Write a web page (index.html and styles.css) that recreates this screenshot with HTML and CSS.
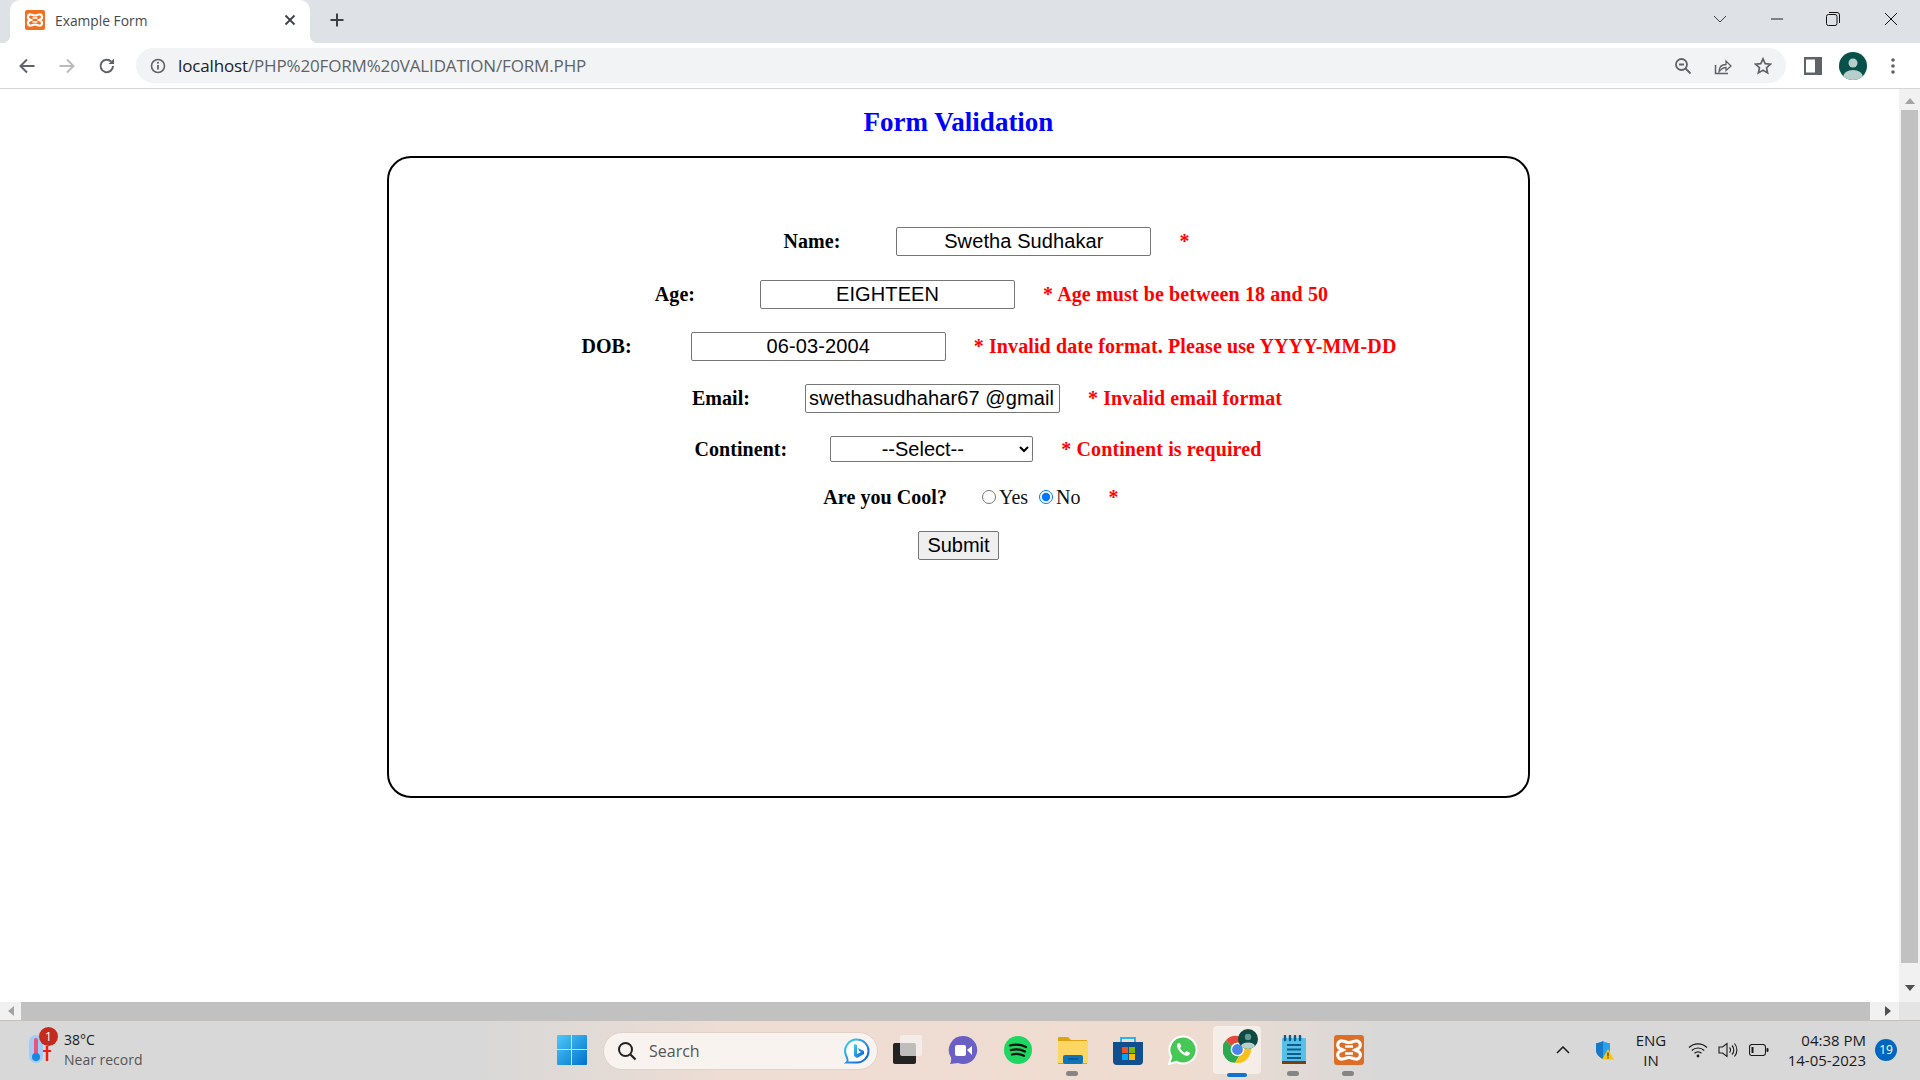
FILE: index.html
```html
<!DOCTYPE html>
<html lang="en">
<head>
<meta charset="utf-8">
<title>Example Form</title>
<link rel="stylesheet" href="styles.css">
</head>
<body>
<div class="window">
  <header class="tabstrip">
    <div class="tab">
      <svg class="favicon" viewBox="0 0 20 20"><rect width="20" height="20" rx="2" fill="#f0701f"/><path d="M6 4.500c1.500 0 2 1 4 1s2.500-1 4-1a2.500 2.500 0 0 1 1 5l-1 .5 1 .5a2.500 2.500 0 0 1-1 5c-1.500 0-2-1-4-1s-2.500 1-4 1a2.500 2.500 0 0 1-1-5l1-.5-1-.5a2.500 2.500 0 0 1 1-5Z" fill="none" stroke="#fff" stroke-width="2.200"/><path d="M7.500 8h5M7.500 12h5" stroke="#fff" stroke-width="1.500"/></svg>
      <span class="tab-title">Example Form</span>
      <svg class="tab-close" viewBox="0 0 12 12"><path d="M1.500 1.500l9 9M10.500 1.500l-9 9" stroke="#3c4043" stroke-width="1.800"/></svg>
    </div>
    <svg class="new-tab" viewBox="0 0 16 16"><path d="M8 1.500v13M1.500 8h13" stroke="#3c4043" stroke-width="2"/></svg>
    <div class="window-controls">
      <svg class="wc wc-chev" viewBox="0 0 14 8"><path d="M1 1l6 6 6-6" fill="none" stroke="#3c4043" stroke-width="1"/></svg>
      <svg class="wc wc-min" viewBox="0 0 14 14"><path d="M0 7h13" stroke="#111" stroke-width="1"/></svg>
      <svg class="wc wc-max" viewBox="0 0 14 14"><rect x=".5" y="2.500" width="10.500" height="11" rx="2" fill="none" stroke="#111"/><path d="M3 .5h8a2.500 2.500 0 0 1 2.500 2.500v8" fill="none" stroke="#111"/></svg>
      <svg class="wc wc-close" viewBox="0 0 14 14"><path d="M1 1l12 12M13 1L1 13" stroke="#111" stroke-width="1"/></svg>
    </div>
  </header>

  <nav class="toolbar">
    <svg class="nav-icon" viewBox="0 0 18 18"><path d="M16.500 9H2.500M9 2.500L2.500 9 9 15.500" fill="none" stroke="#5f6368" stroke-width="2"/></svg>
    <svg class="nav-icon" viewBox="0 0 18 18"><path d="M1.500 9h14M9 2.500L15.500 9 9 15.500" fill="none" stroke="#b9bbbe" stroke-width="2"/></svg>
    <svg class="nav-icon" viewBox="0 0 18 18"><path d="M15 9a6.200 6.200 0 1 1-1.800-4.400" fill="none" stroke="#5f6368" stroke-width="2"/><path d="M16 1.500V7h-5.500z" fill="#5f6368"/></svg>
    <div class="omnibox">
      <svg class="info" viewBox="0 0 16 16"><circle cx="8" cy="8" r="6.500" fill="none" stroke="#5f6368" stroke-width="1.600"/><path d="M8 7v4.500" stroke="#5f6368" stroke-width="1.800"/><circle cx="8" cy="4.800" r="1" fill="#5f6368"/></svg>
      <span class="url"><span class="url-host">localhost</span>/PHP%20FORM%20VALIDATION/FORM.PHP</span>
      <span class="omni-actions">
        <svg class="omni-icon" viewBox="0 0 18 18"><circle cx="7.500" cy="7.500" r="5.500" fill="none" stroke="#5f6368" stroke-width="1.800"/><path d="M5 7.500h5M11.500 11.500l5 5" stroke="#5f6368" stroke-width="1.800"/></svg>
        <svg class="omni-icon" viewBox="0 0 18 18"><path d="M1.500 8v8.500h12.500" fill="none" stroke="#5f6368" stroke-width="1.500"/><path d="M5 15c0-5 3-7.500 7-7.500V4l5 5-5 4.500V10.500c-3 0-5 1.500-7 4.500Z" fill="none" stroke="#5f6368" stroke-width="1.300"/></svg>
        <svg class="omni-icon" viewBox="0 0 18 18"><path d="M9 1.800l2.200 4.800 5.200.6-3.900 3.500 1.100 5.200L9 13.200l-4.600 2.700 1.100-5.200-3.900-3.500 5.200-.6z" fill="none" stroke="#5f6368" stroke-width="1.700"/></svg>
      </span>
    </div>
    <svg class="side-panel" viewBox="0 0 18 18"><rect width="18" height="18" fill="#5f6368"/><rect x="2" y="2.500" width="9" height="13" fill="#fff"/></svg>
    <svg class="avatar" viewBox="0 0 28 28"><defs><clipPath id="av"><circle cx="14" cy="14" r="14"/></clipPath></defs><circle cx="14" cy="14" r="14" fill="#07514a"/><g clip-path="url(#av)"><circle cx="14" cy="11" r="4.500" fill="#b5d0ca"/><ellipse cx="14" cy="25" rx="10" ry="7" fill="#b5d0ca"/></g></svg>
    <svg class="menu" viewBox="0 0 4 16"><circle cx="2" cy="2" r="1.800" fill="#5f6368"/><circle cx="2" cy="8" r="1.800" fill="#5f6368"/><circle cx="2" cy="14" r="1.800" fill="#5f6368"/></svg>
  </nav>

  <div class="viewport">
    <main class="page">
      <h1 class="title">Form Validation</h1>
      <form class="card">
        <div class="row row-name">
          <label class="label">Name:</label>
          <input class="field" type="text" value="Swetha Sudhakar">
          <span class="err">*</span>
        </div>
        <div class="row row-age">
          <label class="label">Age:</label>
          <input class="field" type="text" value="EIGHTEEN">
          <span class="err">* Age must be between 18 and 50</span>
        </div>
        <div class="row row-dob">
          <label class="label">DOB:</label>
          <input class="field" type="text" value="06-03-2004">
          <span class="err">* Invalid date format. Please use YYYY-MM-DD</span>
        </div>
        <div class="row row-email">
          <label class="label">Email:</label>
          <input class="field field-left" type="text" value="swethasudhahar67 @gmail">
          <span class="err">* Invalid email format</span>
        </div>
        <div class="row row-continent">
          <label class="label">Continent:</label>
          <select class="picker"><option>--Select--</option></select>
          <span class="err">* Continent is required</span>
        </div>
        <div class="row row-cool">
          <span class="label">Are you Cool?</span>
          <span class="radios">
            <input class="radio" type="radio" name="cool"><span class="radio-text">Yes</span>
            <input class="radio radio-no" type="radio" name="cool" checked><span class="radio-text">No</span>
          </span>
          <span class="err">*</span>
        </div>
        <div class="row row-submit">
          <button class="submit" type="button">Submit</button>
        </div>
      </form>
    </main>
    <aside class="vscroll">
      <svg class="v-arrow" viewBox="0 0 10 6"><path d="M5 0l5 6H0z" fill="#a3a3a3"/></svg>
      <div class="v-thumb"></div>
      <svg class="v-arrow v-arrow-down" viewBox="0 0 10 6"><path d="M5 6L0 0h10z" fill="#505050"/></svg>
    </aside>
  </div>

  <div class="hscroll">
    <svg class="h-arrow" viewBox="0 0 6 10"><path d="M0 5l6-5v10z" fill="#a3a3a3"/></svg>
    <div class="h-thumb"></div>
    <svg class="h-arrow h-arrow-right" viewBox="0 0 6 10"><path d="M6 5L0 0v10z" fill="#505050"/></svg>
    <div class="h-corner"></div>
  </div>

  <footer class="taskbar">
    <div class="weather">
      <span class="weather-icon">
        <svg viewBox="0 0 24 36" class="thermo"><rect x="1" y="1" width="14" height="28" rx="7" fill="#9fcdf5"/><rect x="6" y="4" width="4" height="20" rx="2" fill="#e8557c"/><circle cx="8" cy="23" r="4" fill="#1a86e0"/><path d="M19 12v15" stroke="#f21c12" stroke-width="2.500"/><path d="M15 17h8" stroke="#f21c12" stroke-width="2"/></svg>
        <span class="alert">1</span>
      </span>
      <span class="weather-text"><span class="temp">38°C</span><span class="record">Near record</span></span>
    </div>
    <div class="dock">
      <span class="dock-item"><svg class="ic" viewBox="0 0 30 30"><defs><linearGradient id="win" x1="0" y1="0" x2="1" y2="1"><stop offset="0" stop-color="#50c8fb"/><stop offset="1" stop-color="#0072cc"/></linearGradient></defs><path d="M0 1a1 1 0 0 1 1-1h13v14H0zM15 0h14a1 1 0 0 1 1 1v13H15zM0 15h14v15H1a1 1 0 0 1-1-1zM15 15h15v14a1 1 0 0 1-1 1H15z" fill="url(#win)"/></svg></span>
      <div class="searchbox">
        <svg class="search-glass" viewBox="0 0 20 20"><circle cx="8.500" cy="8.500" r="6.500" fill="none" stroke="#222" stroke-width="2"/><path d="M13.500 13.500l5 5" stroke="#222" stroke-width="2.200"/></svg>
        <span class="search-text">Search</span>
        <svg class="bing" viewBox="0 0 26 26"><defs><linearGradient id="bg" x1="0" y1="0" x2="1" y2="1"><stop offset="0" stop-color="#3dd0f0"/><stop offset="1" stop-color="#1057d8"/></linearGradient></defs><path d="M13 1.500a11.500 11.500 0 0 1 0 23H2.500c2-1.500 1-4-.2-6.500A11.500 11.500 0 0 1 13 1.500Z" fill="#fff" stroke="url(#bg)" stroke-width="2"/><path d="M10 6l3 1v9l4-2-2-1-1-3 6 3v3l-7 4-3-2z" fill="url(#bg)"/></svg>
      </div>
      <span class="dock-item"><svg class="ic" viewBox="0 0 30 30"><rect x="0" y="8" width="23" height="21" rx="2" fill="#232323"/><rect x="7" y="0" width="22" height="21" rx="2" fill="#f4f2f0" fill-opacity=".75"/></svg></span>
      <span class="dock-item"><svg class="ic" viewBox="0 0 30 30"><path d="M15 1a14 14 0 1 1-5 27l-8 1c1-2 1.500-4 1-6.500A14 14 0 0 1 15 1Z" fill="#6a5fc4"/><rect x="7" y="10" width="11" height="11" rx="2" fill="#fff"/><path d="M19 15l5-4v9z" fill="#fff"/></svg></span>
      <span class="dock-item"><svg class="ic" viewBox="0 0 30 30"><circle cx="15" cy="15" r="14" fill="#1ed760"/><path d="M7 10.500c6-1.500 11-1 16 1.500M8 15c5-1.200 10-.8 14 1.500M9 19.500c4-1 8-.7 12 1.200" fill="none" stroke="#111" stroke-width="2.300" stroke-linecap="round"/></svg></span>
      <span class="dock-item with-dot"><svg class="ic" viewBox="0 0 30 30"><path d="M0 3a1 1 0 0 1 1-1h9l3 3h16v24H0z" fill="#dfa210"/><path d="M0 6h30v22H0z" fill="#fbd662"/><rect x="5" y="20" width="20" height="9" rx="2" fill="#0f74b8"/><path d="M10 24h10" stroke="#0a3f78" stroke-width="1"/></svg><i class="dot"></i></span>
      <span class="dock-item"><svg class="ic" viewBox="0 0 30 30"><path d="M8 8V3h14v5" fill="none" stroke="#2cb5e8" stroke-width="2"/><path d="M0 7h30v19a4 4 0 0 1-4 4H4a4 4 0 0 1-4-4z" fill="#114f8f"/><rect x="9" y="12" width="6" height="6" fill="#f25022"/><rect x="16" y="12" width="6" height="6" fill="#7fba00"/><rect x="9" y="19" width="6" height="6" fill="#00a4ef"/><rect x="16" y="19" width="6" height="6" fill="#ffb900"/></svg></span>
      <span class="dock-item"><svg class="ic" viewBox="0 0 30 30"><path d="M15 1.500a13.500 13.500 0 1 1-6.500 25.300L1 29l2.300-7.200A13.500 13.500 0 0 1 15 1.500Z" fill="#47c756" stroke="#fff" stroke-width="2"/><path d="M10.500 8c-2 1-2 4 .5 7.500s6 5.800 8.500 5.300c2-.4 2.800-2.300 2.300-3l-3.300-1.700-1.500 1.600c-2-.7-4-2.600-5-4.800l1.300-1.500L11.800 8z" fill="#fff"/></svg></span>
      <span class="dock-item dock-active">
        <svg class="ic ic-chrome" viewBox="0 0 30 30"><path d="M15 1a14 14 0 0 1 12.100 7H15a7 7 0 0 0-6.100 3.500L3 5.500A14 14 0 0 1 15 1Z" fill="#e5483a"/><path d="M3 5.500a14 14 0 0 0 9.500 23.300l5.800-9.800a7 7 0 0 1-9.400-7.500z" fill="#2da94f"/><path d="M27.100 8H15a7 7 0 0 1 3.300 11l-5.800 9.800A14 14 0 0 0 27.100 8Z" fill="#f7c01d"/><circle cx="15" cy="15" r="7" fill="#fff"/><circle cx="15" cy="15" r="5.600" fill="#4a86e8"/></svg>
        <svg class="chrome-badge" viewBox="0 0 20 20"><defs><clipPath id="cb"><circle cx="10" cy="10" r="10"/></clipPath></defs><circle cx="10" cy="10" r="10" fill="#0e4a43"/><g clip-path="url(#cb)"><circle cx="10" cy="8" r="3.200" fill="#5f9a8e"/><ellipse cx="10" cy="17" rx="7" ry="3.500" fill="#b5d0ca"/></g></svg>
        <i class="active-bar"></i>
      </span>
      <span class="dock-item with-dot dock-late"><svg class="ic" viewBox="0 0 30 30"><rect x="3" y="3" width="24" height="25" rx="1" fill="#55c0e8"/><rect x="3" y="26" width="24" height="3" fill="#7a3e14"/><path d="M6 1v4M11 1v4M16 1v4M21 1v4" stroke="#0d5c8c" stroke-width="2.500" stroke-linecap="round"/><path d="M8 10h14M8 14.500h14M8 19h14M8 23h14" stroke="#0d5c8c" stroke-width="1.800"/></svg><i class="dot"></i></span>
      <span class="dock-item with-dot"><svg class="ic" viewBox="0 0 30 30"><rect width="30" height="30" rx="3" fill="#dc6f28"/><path d="M8.500 6c2.500 0 3.500 1.500 6.500 1.500S19 6 21.500 6a4 4 0 0 1 1.500 8l-2 1 2 1a4 4 0 0 1-1.500 8c-2.500 0-3.500-1.500-6.500-1.500S11 24 8.500 24a4 4 0 0 1-1.500-8l2-1-2-1a4 4 0 0 1 1.500-8Z" fill="none" stroke="#fff" stroke-width="3.200"/><path d="M11 11.500h8M11 18.500h8" stroke="#fff" stroke-width="2.500"/></svg><i class="dot"></i></span>
    </div>
    <div class="tray">
      <svg class="tray-caret" viewBox="0 0 14 8"><path d="M1 7l6-6 6 6" fill="none" stroke="#1a1a1a" stroke-width="1.500"/></svg>
      <svg class="tray-shield" viewBox="0 0 20 20"><path d="M9 1c2.500 1.500 4.500 2 7 2.200v6.800c0 4-3 7-7 9-4-2-7-5-7-9V3.200C4.500 3 6.500 2.500 9 1Z" fill="#2aa0e8"/><path d="M9 1v18c-4-2-7-5-7-9V3.200C4.500 3 6.500 2.500 9 1Z" fill="#1878c8"/><path d="M14 9l6 10.500H8z" fill="#fcc419"/><path d="M14 12.500v4M14 17.300v1.200" stroke="#111" stroke-width="1"/></svg>
      <span class="lang"><span>ENG</span><span>IN</span></span>
      <svg class="tray-wifi" viewBox="0 0 20 16"><path d="M1 5.500a13 13 0 0 1 18 0M3.800 8.500a9 9 0 0 1 12.400 0M6.500 11.300a5 5 0 0 1 7 0" fill="none" stroke="#1a1a1a" stroke-width="1.200"/><circle cx="10" cy="14" r="1.400" fill="#1a1a1a"/></svg>
      <svg class="tray-vol" viewBox="0 0 20 16"><path d="M1 5h3.500L9 1.500v13L4.500 11H1z" fill="none" stroke="#1a1a1a" stroke-width="1.100"/><path d="M11.500 5.500a3.500 3.500 0 0 1 0 5M14 3.500a6.500 6.500 0 0 1 0 9M16.500 1.500a10 10 0 0 1 0 13" fill="none" stroke="#1a1a1a" stroke-width="1.100"/></svg>
      <svg class="tray-batt" viewBox="0 0 20 12"><rect x=".5" y=".5" width="16" height="11" rx="2.500" fill="none" stroke="#1a1a1a" stroke-width="1.100"/><rect x="2.500" y="3" width="2" height="6" fill="#1a1a1a"/><rect x="17.500" y="4" width="2" height="4" rx="1" fill="#1a1a1a"/></svg>
      <span class="clock"><span>04:38 PM</span><span>14-05-2023</span></span>
      <span class="notif">19</span>
    </div>
  </footer>
</div>
</body>
</html>
```

FILE: styles.css
```css
* { box-sizing: border-box; }
html, body { margin: 0; height: 100%; overflow: hidden; background: #fff; }
svg { display: block; flex: none; }

.window {
  width: 1920px;
  height: 1080px;
  display: grid;
  grid-template-rows: 43px 46px 913px 18px 60px;
  font-family: "Open Sans", "Noto Sans", sans-serif;
}

/* tab strip */
.tabstrip { display: flex; align-items: stretch; background: #dee1e6; padding-left: 10px; }
.tab {
  position: relative;
  width: 300px;
  background: #fff;
  border-radius: 10px 10px 0 0;
  display: flex;
  align-items: center;
  padding: 0 14px 3px 15px;
}
.tab::before, .tab::after {
  content: "";
  position: absolute;
  bottom: 0;
  width: 8px;
  height: 8px;
}
.tab::before { left: -8px; background: radial-gradient(circle at 0 0, transparent 8px, #fff 8.500px); }
.tab::after { right: -8px; background: radial-gradient(circle at 100% 0, transparent 8px, #fff 8.500px); }
.favicon { width: 20px; height: 20px; margin-right: 10px; }
.tab-title { font-size: 13.800px; color: #45494d; flex: 1; white-space: nowrap; }
.tab-close { width: 12px; height: 12px; }
.new-tab { width: 16px; height: 16px; align-self: center; margin: -3px 0 0 19px; }
.window-controls { margin-left: auto; display: flex; align-items: center; padding-bottom: 6px; }
.wc-chev { width: 14px; height: 8px; margin-right: 44px; }
.wc-min { width: 13px; height: 14px; margin-right: 42px; }
.wc-max { width: 14px; height: 14px; margin-right: 44px; }
.wc-close { width: 14px; height: 14px; margin-right: 22px; }

/* toolbar */
.toolbar {
  display: flex;
  align-items: center;
  background: #fff;
  border-bottom: 1px solid #d4d5d7;
  padding-left: 18px;
}
.nav-icon { width: 18px; height: 18px; margin-right: 22px; }
.omnibox {
  width: 1650px;
  height: 35px;
  margin-left: -2px;
  background: #f1f3f4;
  border-radius: 18px;
  display: flex;
  align-items: center;
  padding: 0 14px 0 15px;
}
.info { width: 16px; height: 16px; margin-right: 12px; margin-left: -1px; }
.url { font-size: 17px; color: #5f6368; white-space: nowrap; letter-spacing: -.15px; }
.url-host { color: #202124; }
.omni-actions { margin-left: auto; display: flex; align-items: center; gap: 22px; }
.omni-icon { width: 18px; height: 18px; }
.side-panel { width: 18px; height: 18px; margin-left: 18px; }
.avatar { width: 28px; height: 28px; margin-left: 17px; }
.menu { width: 4px; height: 16px; margin-left: 24px; }

/* page */
.viewport { display: flex; overflow: hidden; }
.page { width: 1899px; overflow: hidden; font-family: "Liberation Serif", serif; }
.title {
  width: 1917px;
  margin: 16px 0 0;
  height: 51px;
  font-size: 27px;
  line-height: 34px;
  font-weight: bold;
  color: #0000ff;
  text-align: center;
}
.card {
  width: 1143px;
  height: 642px;
  margin-left: 387px;
  border: 2px solid #000;
  border-radius: 24px;
  padding-top: 68px;
  display: flex;
  flex-direction: column;
}
.row { display: flex; align-items: center; justify-content: center; height: 30px; margin-bottom: 22px; }
.label { font-size: 20px; font-weight: bold; color: #000; padding-top: 1px; letter-spacing: .05px; }
.err { font-size: 20px; font-weight: bold; color: #ff0000; white-space: nowrap; margin-left: 28px; padding-top: 1px; letter-spacing: .11px; }
.field {
  width: 255px;
  height: 29px;
  margin-left: var(--gap, 55px);
  padding: 0 4px;
  border: 1px solid #767676;
  border-radius: 2px;
  background: #fff;
  color: #000;
  font: 20px "Liberation Sans", sans-serif;
  letter-spacing: .1px;
  text-align: center;
}
.field-left { text-align: left; padding-left: 3px; }
.picker {
  width: 203px;
  height: 26px;
  margin-left: 43px;
  padding-right: 6px;
  border: 1px solid #767676;
  border-radius: 2px;
  background: #fff;
  color: #000;
  font: 20px "Liberation Sans", sans-serif;
  text-align: center;
}
.radios { display: flex; align-items: center; margin-left: 35px; font-size: 20px; }
.radio { width: 14px; height: 14px; margin: 0 3px 0 0; }
.radio-no { margin-left: 11px; }
.radio-text { color: #111; }
.submit {
  width: 81px;
  height: 29px;
  padding: 0;
  border: 1px solid #767676;
  border-radius: 2px;
  background: #efefef;
  color: #000;
  font: 20px "Liberation Sans", sans-serif;
}
.row-name { padding-left: 56px; margin-bottom: 23px; --gap: 56px; }
.row-age { padding-left: 66px; --gap: 65px; }
.row-dob { padding-left: 61px; --gap: 59px; }
.row-email { padding-left: 57px; margin-bottom: 21px; --gap: 55px; }
.row-continent { padding-left: 39px; margin-bottom: 18px; }
.row-cool { padding-left: 25px; margin-bottom: 18px; }

/* scrollbars */
.vscroll { width: 21px; background: #f1f1f1; display: flex; flex-direction: column; align-items: center; }
.v-arrow { width: 10px; height: 6px; margin: 9px 0 6px; }
.v-arrow-down { margin: auto 0 11px; }
.v-thumb { width: 17px; height: 853px; background: #c1c1c1; }
.hscroll { display: flex; align-items: center; background: #f1f1f1; }
.h-arrow { width: 6px; height: 10px; margin: 0 7px 0 8px; }
.h-arrow-right { margin: 0 0 0 15px; }
.h-thumb { width: 1849px; height: 18px; background: #c1c1c1; }
.h-corner { width: 21px; height: 18px; background: #e4e4e4; margin-left: auto; }

/* taskbar */
.taskbar {
  display: grid;
  grid-template-columns: 544px 1012px 1fr;
  align-items: center;
  border-top: 1px solid #c4c0be;
  background: linear-gradient(90deg, #d8d8d8 0%, #d8d8d8 25%, #eeddd3 38%, #eedcd1 62%, #d8d8d8 72%, #d8d8d8 100%);
}
.weather { display: flex; align-items: center; padding: 0 0 2px 28px; }
.weather-icon { position: relative; width: 36px; height: 42px; display: block; }
.thermo { width: 24px; height: 36px; margin-top: 5px; }
.alert {
  position: absolute;
  left: 11px;
  top: -2px;
  width: 19px;
  height: 19px;
  border-radius: 50%;
  background: #c42b1c;
  color: #fff;
  font-size: 12px;
  line-height: 19px;
  text-align: center;
}
.weather-text { display: flex; flex-direction: column; font-size: 14px; line-height: 20px; }
.temp { color: #1a1a1a; }
.record { color: #555; }

.dock { display: flex; align-items: center; height: 100%; }
.dock-item { position: relative; width: 55px; height: 100%; display: flex; align-items: center; justify-content: center; padding-bottom: 2px; }
.dock-late { margin-left: 1px; }
.ic { width: 30px; height: 30px; }
.searchbox {
  width: 275px;
  height: 38px;
  margin: 0 2px 0 4px;
  border-radius: 19px;
  background: #f8f3ef;
  border: 1px solid #e0d2ca;
  display: flex;
  align-items: center;
  padding: 0 7px 0 13px;
}
.search-glass { width: 20px; height: 20px; }
.search-text { font-size: 16px; color: #555; margin-left: 12px; }
.bing { width: 26px; height: 26px; margin-left: auto; }
.dot { position: absolute; left: 21px; bottom: 4px; width: 12px; height: 5px; border-radius: 3px; background: #858585; }
.dock-active::before {
  content: "";
  position: absolute;
  left: 3px;
  top: 5px;
  width: 48px;
  height: 48px;
  border-radius: 4px;
  background: #f5ede7;
}
.ic-chrome { position: relative; width: 29px; height: 29px; }
.chrome-badge { position: absolute; left: 28px; top: 8px; width: 20px; height: 20px; }
.active-bar { position: absolute; left: 17px; bottom: 3px; width: 20px; height: 4px; border-radius: 2px; background: #0f73d1; }

.tray { display: flex; align-items: center; color: #1a1a1a; padding-bottom: 2px; }
.tray-caret { width: 14px; height: 8px; }
.tray-shield { width: 20px; height: 20px; margin-left: 24px; }
.lang { display: flex; flex-direction: column; align-items: center; width: 40px; margin-left: 17px; font-size: 15px; line-height: 20px; }
.tray-wifi { width: 20px; height: 16px; margin-left: 17px; }
.tray-vol { width: 20px; height: 16px; margin-left: 10px; }
.tray-batt { width: 20px; height: 12px; margin-left: 11px; }
.clock { display: flex; flex-direction: column; align-items: flex-end; width: 88px; margin-left: 9px; font-size: 15px; line-height: 20px; }
.notif { width: 22px; height: 22px; margin-left: 9px; border-radius: 50%; background: #0067c0; color: #fff; font-size: 12px; line-height: 22px; text-align: center; }
```
